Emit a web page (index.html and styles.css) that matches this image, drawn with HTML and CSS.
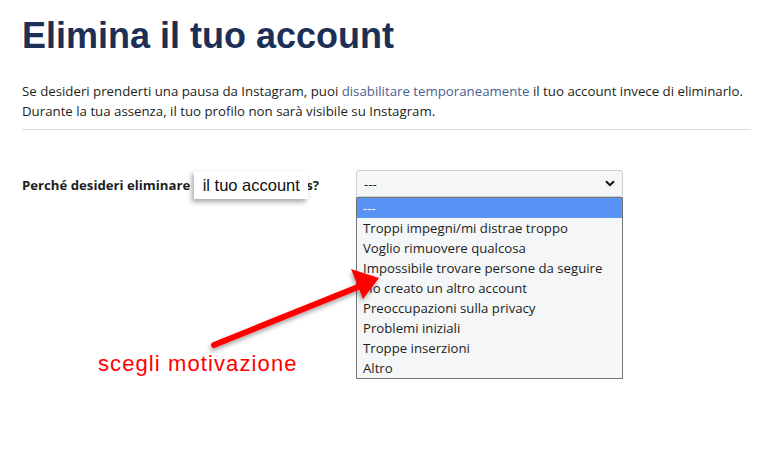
FILE: index.html
```html
<!DOCTYPE html>
<html lang="it">
<head>
    <meta charset="UTF-8">
    <title>Elimina il tuo account</title>
    <link rel="stylesheet" href="styles.css">
</head>
<body>
    <div class="page">
        <h1 class="title">Elimina il tuo account</h1>
        <p class="intro">
            Se desideri prenderti una pausa da Instagram, puoi <a href="#">disabilitare temporaneamente</a> il tuo account invece di eliminarlo.<br>
            Durante la tua assenza, il tuo profilo non sarà visibile su Instagram.
        </p>
        <hr class="divider">

        <div class="form-row">
            <label class="reason-label">
                <span>Perché desideri eliminare</span>
                <span class="callout">il tuo account</span>
                <span class="tail">s?</span>
            </label>
            <div class="select-wrap">
                <div class="select-box">
                    <span>---</span>
                    <svg class="chevron" width="10" height="7" viewBox="0 0 10 7"><path d="M1 1.2 L5 5.2 L9 1.2" fill="none" stroke="#111" stroke-width="2"/></svg>
                </div>
                <ul class="options">
                    <li class="selected">---</li>
                    <li>Troppi impegni/mi distrae troppo</li>
                    <li>Voglio rimuovere qualcosa</li>
                    <li>Impossibile trovare persone da seguire</li>
                    <li>Ho creato un altro account</li>
                    <li>Preoccupazioni sulla privacy</li>
                    <li>Problemi iniziali</li>
                    <li>Troppe inserzioni</li>
                    <li>Altro</li>
                </ul>
            </div>
        </div>

        <!-- annotation layer -->
        <svg class="arrow" width="764" height="472" viewBox="0 0 764 472">
            <defs>
                <filter id="sh" x="-20%" y="-20%" width="140%" height="140%">
                    <feDropShadow dx="-1" dy="3" stdDeviation="2" flood-color="#000" flood-opacity="0.35"/>
                </filter>
            </defs>
            <g filter="url(#sh)">
                <line x1="214" y1="345" x2="358" y2="287" stroke="#ff0000" stroke-width="6" stroke-linecap="round"/>
                <polygon points="379,278 351,269 363,299" fill="#ff0000"/>
            </g>
        </svg>
        <div class="note">scegli motivazione</div>
    </div>
</body>
</html>
```

FILE: styles.css
```css
* {
    margin: 0;
    padding: 0;
    box-sizing: border-box;
}

body {
    background: #fff;
    font-family: "Open Sans", "Noto Sans", sans-serif;
    color: #1c1e21;
}

.page {
    position: relative;
    width: 764px;
    height: 472px;
    padding: 16px 13px 0 22px;
}

.title {
    font-family: "Liberation Sans", Arial, sans-serif;
    font-size: 36px;
    font-weight: bold;
    color: #1c2f57;
    line-height: 40px;
}

.intro {
    margin-top: 25px;
    font-size: 13.25px;
    line-height: 20px;
    color: #1c1e21;
}

.intro a {
    color: #4a5f93;
    text-decoration: none;
}

.divider {
    border: 0;
    border-top: 1px solid #dadde1;
    margin-top: 8px;
}

.form-row {
    display: flex;
    margin-top: 40px;
}

.reason-label {
    display: flex;
    align-items: center;
    width: 334px;
    height: 28px;
    padding-top: 2px;
    font-size: 13.2px;
    font-weight: bold;
    color: #1c1e21;
}

.callout {
    width: 114px;
    height: 28px;
    margin-left: 4px;
    margin-top: -1px;
    background: #fff;
    font-family: "Liberation Sans", Arial, sans-serif;
    font-size: 16.5px;
    font-weight: normal;
    line-height: 28px;
    text-align: center;
    color: #111;
    box-shadow: -2px 3px 5px rgba(0, 0, 0, 0.35);
    position: relative;
    z-index: 1;
}

.tail {
    margin-left: -2px;
}

.select-wrap {
    width: 267px;
}

.select-box {
    display: flex;
    justify-content: space-between;
    align-items: center;
    height: 27px;
    padding: 0 7px;
    background: #f5f6f7;
    border: 1px solid #ccd0d5;
    border-radius: 3px;
    font-size: 13.2px;
}

.options {
    list-style: none;
    background: #f5f6f7;
    border: 1px solid #767676;
    font-size: 13.2px;
    color: #1c1e21;
}

.options li {
    height: 20px;
    line-height: 21px;
    padding-left: 6px;
}

.options li.selected {
    background: #5a93f6;
    color: #fff;
}

.arrow {
    position: absolute;
    left: 0;
    top: 0;
    pointer-events: none;
}

.note {
    position: absolute;
    left: 98px;
    top: 351px;
    font-family: "Liberation Sans", Arial, sans-serif;
    font-size: 22px;
    letter-spacing: 1.1px;
    color: #ff0000;
}
```
